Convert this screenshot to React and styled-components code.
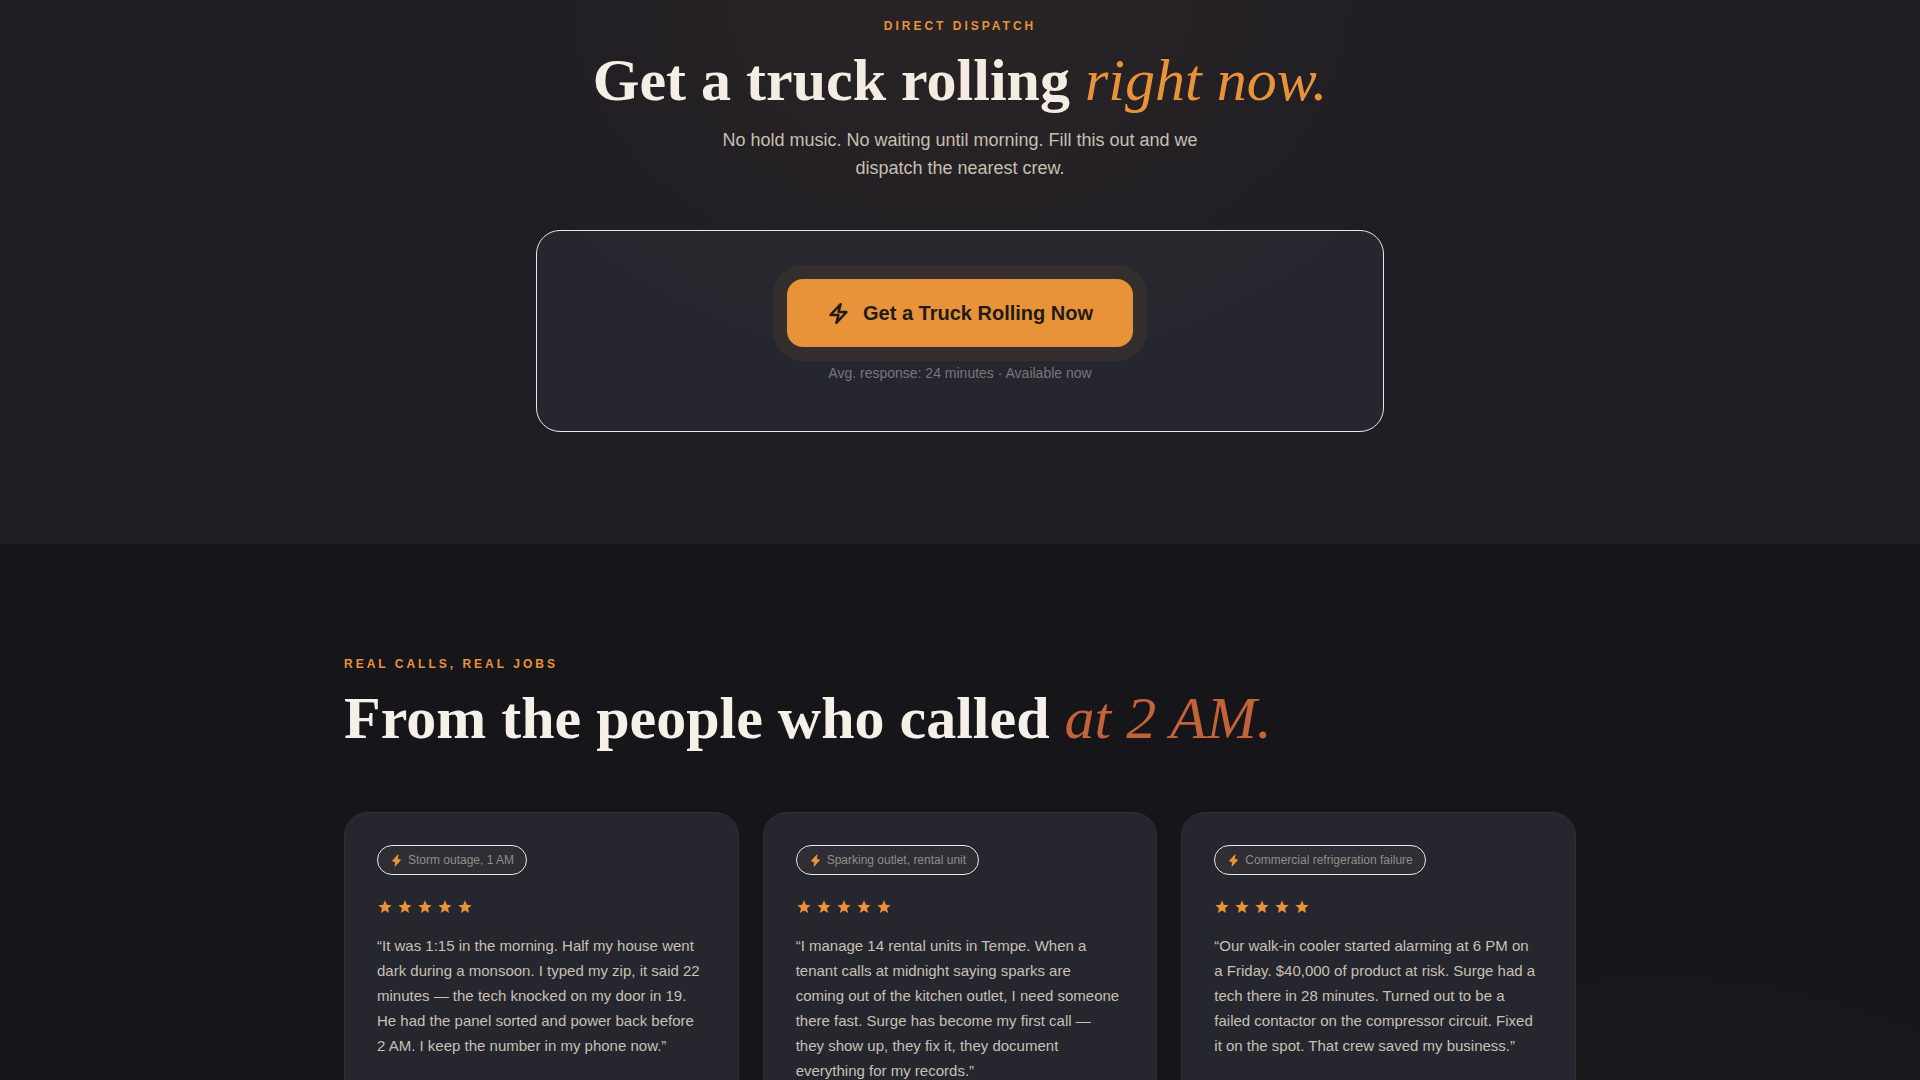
import styled, { createGlobalStyle } from "styled-components"
import { MdStar } from "react-icons/md"
import { PiLightningFill } from "react-icons/pi"

const AMBER = "#e8923a"
const RUST = "#c4623a"
const CREAM = "#f5f0e8"
const SAND = "#c8c0b4"
const SANS = `"Liberation Sans", Arial, sans-serif`
const SERIF = `"Liberation Serif", "Times New Roman", serif`

const reviews = [
    {
        id: 1,
        tag: "Storm outage, 1 AM",
        quote: "“It was 1:15 in the morning. Half my house went dark during a monsoon. I typed my zip, it said 22 minutes — the tech knocked on my door in 19. He had the panel sorted and power back before 2 AM. I keep the number in my phone now.”"
    },
    {
        id: 2,
        tag: "Sparking outlet, rental unit",
        quote: "“I manage 14 rental units in Tempe. When a tenant calls at midnight saying sparks are coming out of the kitchen outlet, I need someone there fast. Surge has become my first call — they show up, they fix it, they document everything for my records.”"
    },
    {
        id: 3,
        tag: "Commercial refrigeration failure",
        quote: "“Our walk-in cooler started alarming at 6 PM on a Friday. $40,000 of product at risk. Surge had a tech there in 28 minutes. Turned out to be a failed contactor on the compressor circuit. Fixed it on the spot. That crew saved my business.”"
    }
]

export default function App() {
    return (
        <>
            <GlobalStyle />
            <main>
                <DispatchSection>
                    <DispatchInner>
                        <Eyebrow>Direct dispatch</Eyebrow>
                        <Title>Get a truck rolling <Accent color={AMBER}>right now.</Accent></Title>
                        <Lead>No hold music. No waiting until morning. Fill this out and we dispatch the nearest crew.</Lead>
                        <DispatchCard>
                            <DispatchButton type="button">
                                <BoltIcon />
                                Get a Truck Rolling Now
                            </DispatchButton>
                            <Response>Avg. response: 24 minutes · Available now</Response>
                        </DispatchCard>
                    </DispatchInner>
                </DispatchSection>

                <ReviewsSection>
                    <ReviewsInner>
                        <Eyebrow>Real calls, real jobs</Eyebrow>
                        <Title>From the people who called <Accent color={RUST}>at 2 AM.</Accent></Title>
                        <ReviewGrid>
                            {reviews.map(review => <Review key={review.id} tag={review.tag} quote={review.quote} />)}
                        </ReviewGrid>
                    </ReviewsInner>
                </ReviewsSection>
            </main>
        </>
    )
}

function BoltIcon() {
    return (
        <svg width="23" height="23" viewBox="0 0 24 24" fill="none" stroke="currentColor" strokeWidth="2.5" strokeLinecap="round" strokeLinejoin="round" aria-hidden="true">
            <path d="m3.75 13.5 10.5-11.25L12 10.5h8.25L9.75 21.75 12 13.5H3.75Z" />
        </svg>
    )
}

function Review({ tag, quote }) {
    return (
        <ReviewCard>
            <Tag>
                <PiLightningFill size={13} color={AMBER} aria-hidden="true" />
                {tag}
            </Tag>
            <Stars role="img" aria-label="5 out of 5 stars">
                {[1, 2, 3, 4, 5].map(n => <MdStar key={n} size={16} />)}
            </Stars>
            <Quote>{quote}</Quote>
        </ReviewCard>
    )
}

const GlobalStyle = createGlobalStyle`
* {
    box-sizing: border-box;
    margin: 0;
}
html {
    scrollbar-width: none;
}
body {
    background-color: #16161a;
    color: ${CREAM};
    font-family: ${SANS};
}
`

const DispatchSection = styled.section`
position: relative;
padding: 18px 24px 112px;
background-color: #1f1e24;

/* warm glow that also tints the card */
&::after {
    content: "";
    position: absolute;
    inset: 0;
    background: radial-gradient(ellipse 520px 384px at 50% 0, rgba(232, 138, 50, 0.05), transparent);
    pointer-events: none;
}
`

const DispatchInner = styled.div`
display: flex;
flex-direction: column;
align-items: center;
max-width: 848px;
margin: 0 auto;
text-align: center;
`

const Eyebrow = styled.p`
color: ${AMBER};
font-size: 12px;
font-weight: 700;
line-height: 16px;
letter-spacing: 3px;
text-transform: uppercase;
`

const Title = styled.h2`
margin-top: 13px;
font-family: ${SERIF};
font-size: 60px;
font-weight: 700;
line-height: 66px;
`

const Accent = styled.em`
color: ${props => props.color};
font-style: italic;
font-weight: 400;
`

const Lead = styled.p`
max-width: 512px;
margin-top: 13px;
color: ${SAND};
font-size: 18px;
line-height: 28px;
`

const DispatchCard = styled.div`
display: flex;
flex-direction: column;
align-items: center;
width: 100%;
margin-top: 48px;
padding: 48px;
border: 1px solid #e5e7eb;
border-radius: 24px;
background-color: #26262e;
`

const DispatchButton = styled.button`
display: flex;
align-items: center;
gap: 13px;
height: 68px;
padding: 0 40px;
border: none;
border-radius: 16px;
background-color: ${AMBER};
box-shadow: 0 0 0 14px rgba(232, 146, 58, 0.07);
color: #1e1a16;
font-family: ${SANS};
font-size: 20px;
font-weight: 700;
cursor: pointer;
`

const Response = styled.p`
margin-top: 16px;
color: #77767a;
font-size: 14px;
line-height: 20px;
`

const ReviewsSection = styled.section`
padding: 112px 24px;
background: radial-gradient(ellipse 600px 360px at 86% 700px, rgba(196, 98, 58, 0.03), transparent) #16161a;
`

const ReviewsInner = styled.div`
max-width: 1232px;
margin: 0 auto;
`

const ReviewGrid = styled.div`
display: grid;
grid-template-columns: repeat(3, 1fr);
gap: 24px;
margin-top: 61px;
`

const ReviewCard = styled.article`
display: flex;
flex-direction: column;
align-items: flex-start;
padding: 32px;
border: 1px solid #2f2f35;
border-radius: 24px;
background-color: #26262e;
`

const Tag = styled.span`
display: flex;
align-items: center;
gap: 5px;
height: 30px;
padding: 0 12px;
border: 1px solid #e5e7eb;
border-radius: 15px;
background-color: #2f2e34;
color: #918d88;
font-size: 12px;
`

const Stars = styled.div`
display: flex;
gap: 4px;
margin-top: 24px;
color: ${AMBER};
`

const Quote = styled.p`
margin-top: 18px;
padding-right: 4px;
color: ${SAND};
font-size: 15px;
line-height: 25px;
`
